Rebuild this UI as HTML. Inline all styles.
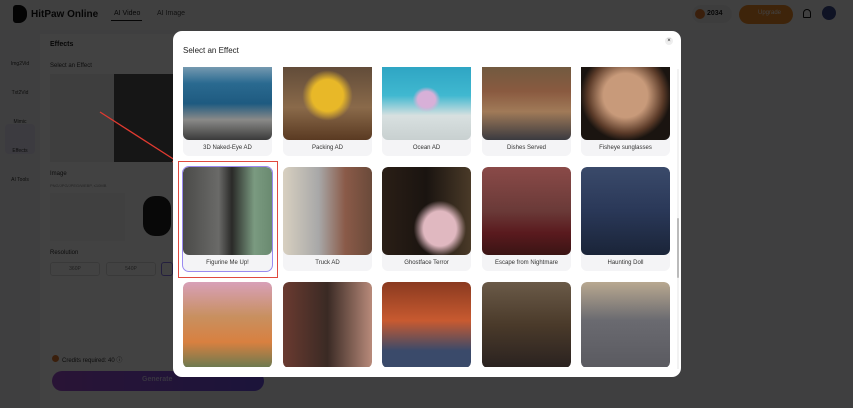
<!DOCTYPE html><html><head><style>
*{margin:0;padding:0;box-sizing:border-box}
html,body{width:853px;height:408px;overflow:hidden;background:#f4f4f6;font-family:"Liberation Sans",sans-serif;position:relative}
.a{position:absolute}
.card{position:absolute;width:89px;background:#f4f4f6;border-radius:6px;overflow:hidden}
.img{width:89px;border-radius:6px}
.lb{font-size:6px;color:#333;text-align:center;height:16px;line-height:16px}
</style></head><body>
<div class="a" style="left:0;top:0;width:853px;height:30px;background:#f6f6f6"></div>
<div class="a" style="left:13px;top:5px;width:14px;height:18px;background:#111;border-radius:3px 8px 8px 3px"></div>
<div class="a" style="left:31px;top:9px;font-size:10px;font-weight:bold;color:#151515">HitPaw Online</div>
<div class="a" style="left:114px;top:10px;font-size:7px;color:#1a1a1a">AI Video</div>
<div class="a" style="left:111px;top:20px;width:31px;height:1px;background:#1a1a1a"></div>
<div class="a" style="left:157px;top:10px;font-size:7px;color:#444">AI Image</div>
<div class="a" style="left:692px;top:5px;width:40px;height:18px;border-radius:9px;background:#ececec"></div>
<div class="a" style="left:695px;top:9px;width:10px;height:10px;border-radius:50%;background:#e07a30"></div>
<div class="a" style="left:707px;top:10px;font-size:7px;font-weight:bold;color:#1a1a1a">2034</div>
<div class="a" style="left:739px;top:5px;width:54px;height:19px;border-radius:10px;background:#f08a2a"></div>
<div class="a" style="left:758px;top:10px;font-size:6px;color:#fff">Upgrade</div>
<div class="a" style="left:803px;top:9px;width:8px;height:9px;border:1px solid #111;border-radius:4px 4px 1px 1px"></div>
<div class="a" style="left:822px;top:6px;width:14px;height:14px;border-radius:50%;background:#3a4a8a"></div>
<div class="a" style="left:5px;top:124px;width:30px;height:30px;border-radius:4px;background:#e6e2f6"></div>
<div class="a" style="left:9px;top:50px;font-size:5px;color:#333;line-height:29px;text-align:center;width:22px">Img2Vid<br>Txt2Vid<br>Mimic<br>Effects<br>AI Tools</div>
<div class="a" style="left:40px;top:34px;width:140px;height:374px;background:#fff"></div>
<div class="a" style="left:50px;top:41px;font-size:7px;font-weight:bold;color:#1a1a1a">Effects</div>
<div class="a" style="left:50px;top:63px;font-size:6px;color:#333">Select an Effect</div>
<div class="a" style="left:50px;top:74px;width:125px;height:88px;background:#eee"></div>
<div class="a" style="left:114px;top:74px;width:60px;height:88px;background:#555"></div>
<div class="a" style="left:50px;top:171px;font-size:6px;color:#333">Image</div>
<div class="a" style="left:50px;top:183px;font-size:4px;color:#888">PNG/JPG/JPEG/WEBP, ≤10MB</div>
<div class="a" style="left:50px;top:193px;width:75px;height:48px;background:#f6f6f6"></div>
<div class="a" style="left:143px;top:196px;width:28px;height:40px;border-radius:12px;background:#222"></div>
<div class="a" style="left:50px;top:250px;font-size:6px;color:#333">Resolution</div>
<div class="a" style="left:50px;top:262px;width:50px;height:14px;border:1px solid #ddd;border-radius:3px;font-size:5px;color:#777;text-align:center;line-height:12px">360P</div>
<div class="a" style="left:106px;top:262px;width:50px;height:14px;border:1px solid #ddd;border-radius:3px;font-size:5px;color:#777;text-align:center;line-height:12px">540P</div>
<div class="a" style="left:161px;top:262px;width:12px;height:14px;border:1px solid #8a7af0;border-radius:3px"></div>
<div class="a" style="left:52px;top:355px;width:7px;height:7px;border-radius:50%;background:#e07a30"></div>
<div class="a" style="left:62px;top:355px;font-size:6px;color:#333">Credits required: 40 ⓘ</div>
<div class="a" style="left:52px;top:371px;width:212px;height:20px;border-radius:10px;background:linear-gradient(90deg,#a050d0,#6a50e0)"></div>
<div class="a" style="left:142px;top:376px;font-size:7px;font-weight:bold;color:#d8c8f8">Generate</div>
<div class="a" style="left:0;top:0;width:853px;height:408px;background:rgba(0,0,0,0.74)"></div>
<svg class="a" style="left:98px;top:110px" width="84" height="56"><line x1="2" y1="2" x2="80" y2="52" stroke="#e03a30" stroke-width="1.3"/><polygon points="83,55 74,52 78,46" fill="#e03a30"/></svg>

<div class="a" style="left:173px;top:31px;width:508px;height:346px;background:#fff;border-radius:9px;overflow:hidden">
<div class="a" style="left:10px;top:15px;font-size:8px;color:#222">Select an Effect</div>
<div class="a" style="left:492px;top:6px;width:8px;height:8px;border-radius:50%;background:#eee;font-size:6px;line-height:8px;text-align:center;color:#222">×</div>
<div class="a" style="left:504px;top:38px;width:2px;height:300px;background:#f2f2f2"></div>
<div class="a" style="left:504px;top:187px;width:2px;height:60px;background:#bbb;border-radius:1px"></div>
<div class="a" style="left:0;top:36px;width:508px;height:300px;overflow:hidden">
 <div class="card" style="left:10px;top:-8px"><div class="img" style="height:81px;background:linear-gradient(180deg,#9ab0c0 0%,#2a6a90 30%,#1e5a80 55%,#8a8a88 75%,#3a3a3a 100%)"></div><div class="lb">3D Naked-Eye AD</div></div>
 <div class="card" style="left:110px;top:-8px"><div class="img" style="height:81px;background:radial-gradient(ellipse at 50% 45%,#e8b828 0 25%,transparent 40%),linear-gradient(180deg,#5a4636,#8a6a4a 60%,#5a3a22)"></div><div class="lb">Packing AD</div></div>
 <div class="card" style="left:209px;top:-8px"><div class="img" style="height:81px;background:radial-gradient(ellipse at 50% 50%,#d8b0d8 0 14%,transparent 22%),linear-gradient(180deg,#2aa0c0,#40b8d0 45%,#d8e0e0 70%,#c8d0d0)"></div><div class="lb">Ocean AD</div></div>
 <div class="card" style="left:309px;top:-8px"><div class="img" style="height:81px;background:linear-gradient(180deg,#6a5a40,#8a5a40 40%,#a07a58 65%,#3a3a40)"></div><div class="lb">Dishes Served</div></div>
 <div class="card" style="left:408px;top:-8px"><div class="img" style="height:81px;background:radial-gradient(circle at 50% 45%,#c89a7a 0 35%,#5a3a28 60%,#1a1410 72%)"></div><div class="lb">Fisheye sunglasses</div></div>
 <div class="card" style="left:10px;top:100px;outline:1px solid #9a8af0;border-radius:6px"><div class="img" style="height:88px;background:linear-gradient(90deg,#4a4a48,#6a6a68 40%,#2a2a28 55%,#7a9a80 80%,#6a8a70)"></div><div class="lb">Figurine Me Up!</div></div>
 <div class="card" style="left:110px;top:100px"><div class="img" style="height:88px;background:linear-gradient(90deg,#d8d0c0,#a8a8a8 40%,#8a5a48 70%,#6a4a3a)"></div><div class="lb">Truck AD</div></div>
 <div class="card" style="left:209px;top:100px"><div class="img" style="height:88px;background:radial-gradient(ellipse at 65% 70%,#e0b8c0 0 20%,transparent 32%),linear-gradient(90deg,#2a1e16,#1a1410 50%,#4a3a28)"></div><div class="lb">Ghostface Terror</div></div>
 <div class="card" style="left:309px;top:100px"><div class="img" style="height:88px;background:linear-gradient(180deg,#8a4a48,#6a3a38 50%,#5a1a1e 75%,#3a1414)"></div><div class="lb">Escape from Nightmare</div></div>
 <div class="card" style="left:408px;top:100px"><div class="img" style="height:88px;background:linear-gradient(180deg,#3a4a6a,#2a3858 50%,#1a2438)"></div><div class="lb">Haunting Doll</div></div>
 <div class="a" style="left:5px;top:94px;width:100px;height:117px;border:1.5px solid #e04a40"></div>
 <div class="card" style="left:10px;top:215px"><div class="img" style="height:86px;background:linear-gradient(180deg,#d8a0b8,#c89060 40%,#d88040 70%,#6a7a50)"></div></div>
 <div class="card" style="left:110px;top:215px"><div class="img" style="height:86px;background:linear-gradient(90deg,#6a3a30,#3a2a24 50%,#b88a7a)"></div></div>
 <div class="card" style="left:209px;top:215px"><div class="img" style="height:86px;background:linear-gradient(180deg,#8a3a20,#c85a30 45%,#3a4a6a 80%)"></div></div>
 <div class="card" style="left:309px;top:215px"><div class="img" style="height:86px;background:linear-gradient(180deg,#6a5a48,#4a3a2a 50%,#2a2220)"></div></div>
 <div class="card" style="left:408px;top:215px"><div class="img" style="height:86px;background:linear-gradient(180deg,#b8a890,#6a6a70 45%,#5a5a60)"></div></div>
</div>
</div>
</body></html>
